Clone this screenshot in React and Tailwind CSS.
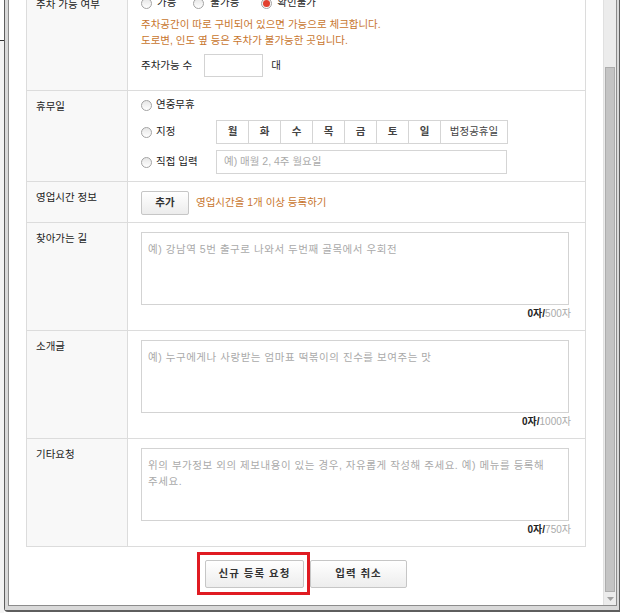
import React from 'react';

const Radio = ({ checked, className = '' }) => (
  <span
    className={`w-[11px] h-[11px] rounded-full border border-[#a3a3a3] bg-gradient-to-b from-[#e6e6e6] to-white flex items-center justify-center shrink-0 ${className}`}
  >
    {checked && <span className="w-[7px] h-[7px] rounded-full bg-[#e2402f]" />}
  </span>
);

const Label = ({ children }) => (
  <div className="w-[101px] shrink-0 bg-[#f8f8f8] border-r border-[#dcdcdc] pl-[9px] pt-[8px] leading-[14px]">
    {children}
  </div>
);

const Row = ({ label, children }) => (
  <div className="flex border-b border-[#dcdcdc]">
    <Label>{label}</Label>
    <div className="flex-1">{children}</div>
  </div>
);

const TextBox = ({ placeholder, max }) => (
  <div className="pt-[9px] pl-[13px] pb-[9px]">
    <div className="w-[428px] h-[73px] border border-[#d3d3d3] bg-white pl-[6px] pr-[1px] pt-[8px] leading-[16px] text-[#aaaaaa] tracking-[0.55px] break-keep">
      {placeholder}
    </div>
    <div className="w-[430px] mt-[2px] h-[14px] leading-[14px] text-right text-[10px]">
      <span className="font-bold text-[#222]">0자/</span>
      <span className="text-[#aaaaaa]">{max}자</span>
    </div>
  </div>
);

const days = ['월', '화', '수', '목', '금', '토', '일'];

export default function App() {
  return (
    <div className="w-[620px] h-[613px] bg-white flex overflow-hidden font-['Liberation_Sans','Noto_Sans_CJK_KR',sans-serif] text-[10.5px] text-[#222]">
      <div className="w-[4px] shrink-0 flex flex-col">
        <div className="h-[40px]" />
        <div className="h-px bg-[#333]" />
        <div className="flex-1 bg-[#f4f4f4]" />
      </div>
      <div className="flex-1 h-[612px] flex border-l border-r border-b-2 border-[#5e5e5e] rounded-bl-[4px]">
        <div className="flex-1 flex border-l-[3px] border-r-[2px] border-b-[4px] border-[#d9d9d9]">
          <div className="flex-1 flex border-l border-r border-b border-[#8c8c8c]">
            <div className="flex-1 overflow-hidden bg-white flex flex-col">
              <div className="-mt-[11px] ml-[17px] w-[560px] border-l border-r border-b border-[#dcdcdc]">
                <Row label="주차 가능 여부">
                  <div className="pt-[6px] pl-[13px] pb-[13px]">
                    <div className="h-[16px] flex items-center">
                      <Radio />
                      <span className="ml-[5px]">가능</span>
                      <Radio className="ml-[17px]" />
                      <span className="ml-[6px]">불가능</span>
                      <Radio checked className="ml-[22px]" />
                      <span className="ml-[5px]">확인불가</span>
                    </div>
                    <div className="mt-[5px] leading-[16px] text-[#c8762e]">
                      <p>주차공간이 따로 구비되어 있으면 가능으로 체크합니다.</p>
                      <p>도로변, 인도 옆 등은 주차가 불가능한 곳입니다.</p>
                    </div>
                    <div className="mt-[6px] h-[23px] flex items-center">
                      <span>주차가능 수</span>
                      <span className="ml-[12px] w-[59px] h-[23px] border border-[#d3d3d3] bg-white" />
                      <span className="ml-[8px]">대</span>
                    </div>
                  </div>
                </Row>
                <Row label="휴무일">
                  <div className="pt-[6px] pl-[13px] pb-[7px]">
                    <div className="h-[16px] flex items-center">
                      <Radio />
                      <span className="ml-[4px]">연중무휴</span>
                    </div>
                    <div className="mt-[7px] flex items-center">
                      <div className="w-[75px] flex items-center">
                        <Radio />
                        <span className="ml-[4px]">지정</span>
                      </div>
                      <div className="flex h-[24px] border border-[#d5d5d5] bg-white">
                        {days.map((d) => (
                          <span
                            key={d}
                            className="w-[32px] border-r border-[#d5d5d5] flex items-center justify-center font-bold text-[#444]"
                          >
                            {d}
                          </span>
                        ))}
                        <span className="w-[66px] flex items-center justify-center text-[#444]">법정공휴일</span>
                      </div>
                    </div>
                    <div className="mt-[6px] flex items-center">
                      <div className="w-[75px] flex items-center">
                        <Radio />
                        <span className="ml-[4px]">직접 입력</span>
                      </div>
                      <div className="w-[291px] h-[24px] border border-[#d5d5d5] bg-white flex items-center px-[7px] text-[#aaaaaa]">
                        예) 매월 2, 4주 월요일
                      </div>
                    </div>
                  </div>
                </Row>
                <Row label="영업시간 정보">
                  <div className="pt-[9px] pl-[13px] pb-[7px] flex items-center">
                    <span className="w-[48px] h-[24px] border border-[#c6c6c6] rounded-[2px] bg-gradient-to-b from-white to-[#ececec] flex items-center justify-center font-bold text-[#333]">
                      추가
                    </span>
                    <span className="ml-[7px] text-[#c8762e]">영업시간을 1개 이상 등록하기</span>
                  </div>
                </Row>
                <Row label="찾아가는 길">
                  <TextBox placeholder="예) 강남역 5번 출구로 나와서 두번째 골목에서 우회전" max="500" />
                </Row>
                <Row label="소개글">
                  <TextBox placeholder="예) 누구에게나 사랑받는 엄마표 떡볶이의 진수를 보여주는 맛" max="1000" />
                </Row>
                <div className="flex">
                  <Label>기타요청</Label>
                  <div className="flex-1">
                    <TextBox
                      placeholder="위의 부가정보 외의 제보내용이 있는 경우, 자유롭게 작성해 주세요. 예) 메뉴를 등록해 주세요."
                      max="750"
                    />
                  </div>
                </div>
              </div>
              <div className="pt-[13px] ml-[17px] w-[560px] flex justify-center gap-[6px]">
                <div className="relative">
                  <span className="w-[99px] h-[28px] border border-[#c6c6c6] rounded-[2px] bg-gradient-to-b from-white to-[#ededed] flex items-center justify-center font-bold text-[#333] tracking-[1px]">
                    신규 등록 요청
                  </span>
                  <span className="absolute -left-[8px] -top-[8px] -right-[6px] -bottom-[7px] border-[3px] border-[#e01b22]" />
                </div>
                <span className="w-[97px] h-[28px] border border-[#c6c6c6] rounded-[2px] bg-gradient-to-b from-white to-[#ededed] flex items-center justify-center font-bold text-[#333] tracking-[1px]">
                  입력 취소
                </span>
              </div>
            </div>
            <div className="w-[13px] shrink-0 flex flex-col bg-[#ececec] border-l border-[#e0e0e0]">
              <div className="h-[67px]" />
              <div className="h-[525px] mx-[1px] bg-[#c4c4c4] border border-[#adadad]" />
              <div className="flex-1 flex items-center justify-center">
                <svg width="7" height="4" viewBox="0 0 7 4">
                  <path d="M0 0 L7 0 L3.5 4 Z" fill="#a0a0a0" />
                </svg>
              </div>
            </div>
          </div>
        </div>
      </div>
    </div>
  );
}
